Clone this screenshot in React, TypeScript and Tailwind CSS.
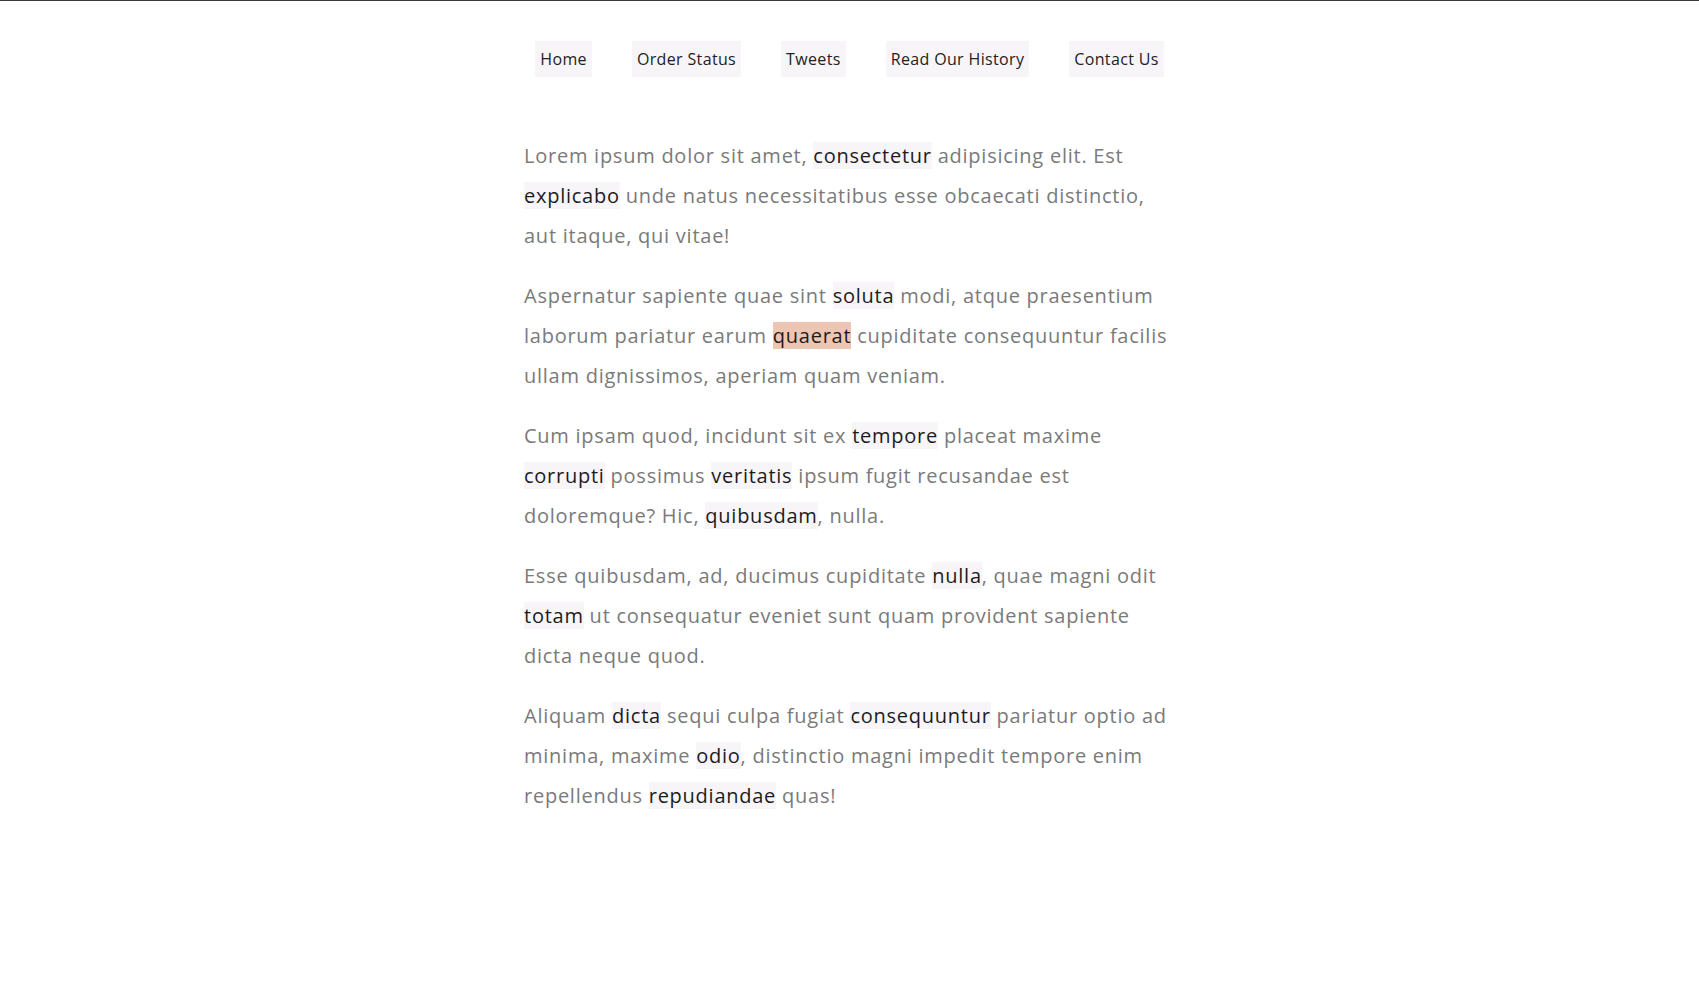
import React from "react";

type Part = string | { word: string; accent?: boolean };

const navLinks = ["Home", "Order Status", "Tweets", "Read Our History", "Contact Us"];

const paragraphs: Part[][] = [
  [
    "Lorem ipsum dolor sit amet, ",
    { word: "consectetur" },
    " adipisicing elit. Est ",
    { word: "explicabo" },
    " unde natus necessitatibus esse obcaecati distinctio, aut itaque, qui vitae!",
  ],
  [
    "Aspernatur sapiente quae sint ",
    { word: "soluta" },
    " modi, atque praesentium laborum pariatur earum ",
    { word: "quaerat", accent: true },
    " cupiditate consequuntur facilis ullam dignissimos, aperiam quam veniam.",
  ],
  [
    "Cum ipsam quod, incidunt sit ex ",
    { word: "tempore" },
    " placeat maxime ",
    { word: "corrupti" },
    " possimus ",
    { word: "veritatis" },
    " ipsum fugit recusandae est doloremque? Hic, ",
    { word: "quibusdam" },
    ", nulla.",
  ],
  [
    "Esse quibusdam, ad, ducimus cupiditate ",
    { word: "nulla" },
    ", quae magni odit ",
    { word: "totam" },
    " ut consequatur eveniet sunt quam provident sapiente dicta neque quod.",
  ],
  [
    "Aliquam ",
    { word: "dicta" },
    " sequi culpa fugiat ",
    { word: "consequuntur" },
    " pariatur optio ad minima, maxime ",
    { word: "odio" },
    ", distinctio magni impedit tempore enim repellendus ",
    { word: "repudiandae" },
    " quas!",
  ],
];

function Highlight({ word, accent }: { word: string; accent?: boolean }) {
  return (
    <span
      className={
        accent ? "bg-[#ecc6b3] text-[#1c1c1c]" : "bg-[#f7f5f8] text-[#1c1c1c]"
      }
    >
      {word}
    </span>
  );
}

export default function App() {
  return (
    <div
      className="min-h-[1008px] bg-white border-t border-[#3a3a3a] pt-10"
      style={{ fontFamily: '"Open Sans", "Liberation Sans", sans-serif' }}
    >
      {/* Nav */}
      <nav className="flex justify-center gap-10">
        {navLinks.map((link) => (
          <a
            key={link}
            href="#"
            className="bg-[#f7f5f8] px-[5px] py-[5px] text-[16px] leading-[26px] tracking-[0.35px] text-[#222]"
          >
            {link}
          </a>
        ))}
      </nav>

      {/* Body copy */}
      <main className="mx-auto mt-[59px] w-[651px]">
        {paragraphs.map((parts, i) => (
          <p
            key={i}
            className="mb-5 text-[20px] leading-[40px] tracking-[0.75px] text-[#7a7a7a]"
          >
            {parts.map((part, j) =>
              typeof part === "string" ? (
                <React.Fragment key={j}>{part}</React.Fragment>
              ) : (
                <Highlight key={j} word={part.word} accent={part.accent} />
              )
            )}
          </p>
        ))}
      </main>
    </div>
  );
}
